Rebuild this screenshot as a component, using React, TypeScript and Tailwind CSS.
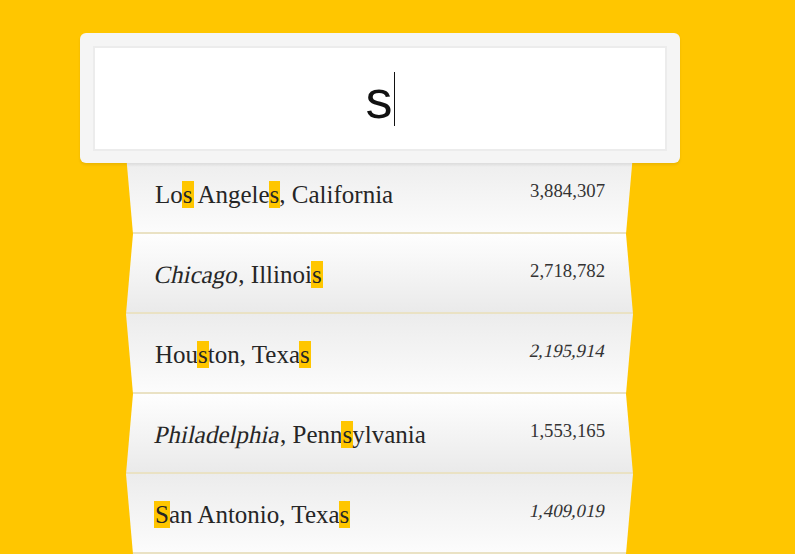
import React from "react";

type Seg = { t: string; hl?: boolean; it?: boolean };
type Row = { name: Seg[]; pop: string; popIt?: boolean; wideTop: boolean };

const rows: Row[] = [
  {
    name: [{ t: "Lo" }, { t: "s", hl: true }, { t: " Angele" }, { t: "s", hl: true }, { t: ", California" }],
    pop: "3,884,307",
    wideTop: true,
  },
  {
    name: [{ t: "Chicago", it: true }, { t: ", Illinoi" }, { t: "s", hl: true }],
    pop: "2,718,782",
    wideTop: false,
  },
  {
    name: [{ t: "Hou" }, { t: "s", hl: true }, { t: "ton, Texa" }, { t: "s", hl: true }],
    pop: "2,195,914",
    popIt: true,
    wideTop: true,
  },
  {
    name: [{ t: "Philadelphia", it: true }, { t: ", Penn" }, { t: "s", hl: true }, { t: "ylvania" }],
    pop: "1,553,165",
    wideTop: false,
  },
  {
    name: [{ t: "S", hl: true }, { t: "an Antonio, Texa" }, { t: "s", hl: true }],
    pop: "1,409,019",
    popIt: true,
    wideTop: true,
  },
];

export default function App() {
  return (
    <div className="h-screen w-full overflow-hidden bg-[#ffc600] pt-[33px]">
      <div className="relative z-10 ml-[80px] w-[600px] h-[130px] rounded-[6px] bg-[#f5f5f5] p-[13px] pb-[12px] shadow-[0_2px_3px_rgba(0,0,0,0.08)]">
        <div className="flex h-full w-full items-center justify-center border-2 border-[#ececec] bg-white">
          <span className="text-[54px] leading-[54px] text-[#111] font-['Liberation_Sans',Arial,sans-serif]">s</span>
          <span className="ml-[1px] h-[54px] w-px bg-[#111]" />
        </div>
      </div>
      <div className="-mt-[9px] ml-[126px] w-[507px] font-['Liberation_Serif','Times_New_Roman',serif]">
        {rows.map((r, i) => (
          <div
            key={i}
            className={
              "flex h-[80px] items-start justify-between border-b-2 border-[#eae2c4] pl-[29px] pr-[28px] pt-[22px] " +
              (r.wideTop
                ? "bg-[linear-gradient(to_bottom,#ececec,#fcfcfc)] [clip-path:polygon(0_0,100%_0,calc(100%_-_7px)_100%,7px_100%)]"
                : "bg-[linear-gradient(to_bottom,#fefefe,#eaeaea)] [clip-path:polygon(7px_0,calc(100%_-_7px)_0,100%_100%,0_100%)]")
            }
          >
            <span className="mt-[4px] text-[25px] leading-[30px] text-[#262626] whitespace-nowrap">
              {r.name.map((s, j) => (
                <span
                  key={j}
                  className={
                    (s.hl ? "bg-[#ffc600] [box-shadow:1px_0_#ffc600,-1px_0_#ffc600] " : "") +
                    (s.it ? "inline-block skew-x-[-12deg]" : "")
                  }
                >
                  {s.t}
                </span>
              ))}
            </span>
            <span
              className={
                "text-[18.75px] leading-[30px] text-[#333] " + (r.popIt ? "inline-block skew-x-[-12deg]" : "")
              }
            >
              {r.pop}
            </span>
          </div>
        ))}
      </div>
    </div>
  );
}
